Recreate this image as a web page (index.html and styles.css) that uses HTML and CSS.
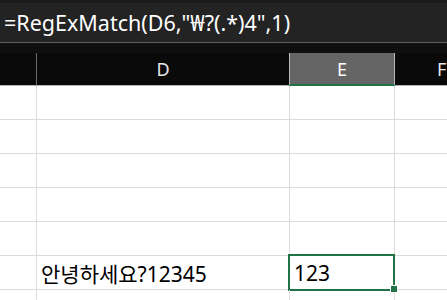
FILE: index.html
```html
<!DOCTYPE html>
<html lang="ko">
<head>
<meta charset="utf-8">
<link rel="stylesheet" href="styles.css">
</head>
<body>
<div class="app">
  <div class="formula">=RegExMatch(D6,"₩?(.*)4",1)</div>
  <div class="strip"></div>
  <div class="sheet">
    <div class="hdr corner"></div>
    <div class="hdr">D</div>
    <div class="hdr sel">E</div>
    <div class="hdr">F</div>

    <div class="c rh"></div><div class="c"></div><div class="c"></div><div class="c last"></div>
    <div class="c rh"></div><div class="c"></div><div class="c"></div><div class="c last"></div>
    <div class="c rh"></div><div class="c"></div><div class="c"></div><div class="c last"></div>
    <div class="c rh"></div><div class="c"></div><div class="c"></div><div class="c last"></div>
    <div class="c rh"></div><div class="c"></div><div class="c"></div><div class="c last"></div>
    <div class="c rh"></div><div class="c txt">안녕하세요?12345</div><div class="c txt active">123</div><div class="c last"></div>
    <div class="c rh"></div><div class="c"></div><div class="c"></div><div class="c last"></div>
  </div>
</div>
</body>
</html>
```
FILE: styles.css
```css
html, body {
  margin: 0;
  padding: 0;
  background: #ffffff;
  overflow: hidden;
}
.app {
  width: 447px;
  height: 300px;
  overflow: hidden;
  font-family: "Noto Sans", "Noto Sans CJK KR", sans-serif;
}
.formula {
  height: 39px;
  border-top: 3px solid #1a1a1a;
  border-bottom: 1px solid #5e5e5e;
  background: #232323;
  color: #ffffff;
  font-size: 21.5px;
  line-height: 39px;
  padding-left: 4px;
  white-space: nowrap;
}
.strip {
  height: 10px;
  background: #0e0f11;
}
.sheet {
  display: grid;
  grid-template-columns: 37px 253px 105px 1fr;
  grid-template-rows: 33px repeat(7, 34px);
}
.hdr {
  background: #0a0a0a;
  color: #e6e6e6;
  font-size: 18px;
  display: flex;
  align-items: center;
  justify-content: center;
  border-bottom: 1px solid #b5b5b5;
  border-right: 1px solid #0a0a0a;
}
.hdr.corner {
  border-right: 1px solid #6a6a6a;
}
.hdr:nth-child(4) {
  justify-content: flex-start;
  padding-left: 42px;
  border-right: none;
}
.hdr.sel {
  background: #656565;
  color: #ffffff;
  border-left: 1px solid #b9b9b9;
  border-right: 1px solid #b9b9b9;
  border-bottom: 2px solid #217346;
  margin-left: -1px;
}
.c {
  border-right: 1px solid #dcdcdc;
  border-bottom: 1px solid #dcdcdc;
  position: relative;
}
.c.last {
  border-right: none;
}
.txt {
  font-size: 21px;
  color: #000000;
  display: flex;
  align-items: center;
  padding-left: 4px;
  white-space: nowrap;
}
.active::after {
  content: "";
  position: absolute;
  left: -2px;
  top: -2px;
  right: -1px;
  bottom: -2px;
  border: 2px solid #217346;
}
.active::before {
  content: "";
  position: absolute;
  right: -3px;
  bottom: -3px;
  width: 6px;
  height: 6px;
  background: #217346;
  border-left: 1px solid #ffffff;
  border-top: 1px solid #ffffff;
  z-index: 2;
}
```
